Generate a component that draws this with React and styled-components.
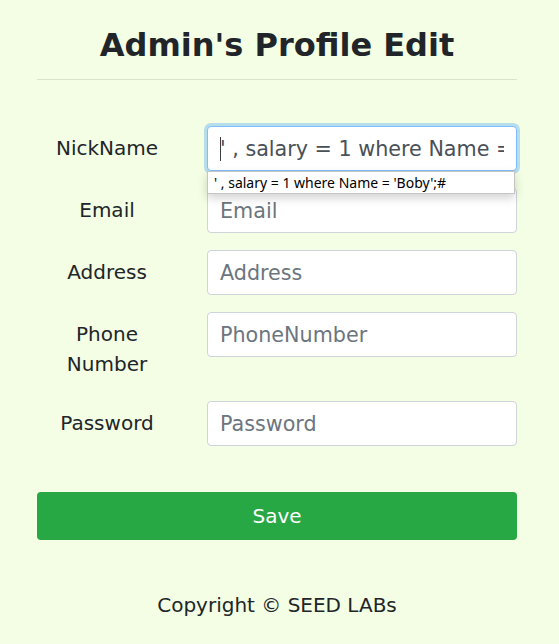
import React from "react";
import styled, { createGlobalStyle } from "styled-components";

const Global = createGlobalStyle`
  html, body { margin: 0; padding: 0; background: #f3fee4; }
  body { font-family: "DejaVu Sans", sans-serif; color: #212529; }
  * { box-sizing: border-box; }
`;

const Page = styled.div`
  width: 480px;
  margin: 0 0 0 37px;
  padding-top: 26px;
  display: flex;
  flex-direction: column;
`;

const Title = styled.h2`
  margin: 0;
  font-size: 32px;
  line-height: 38.4px;
  font-weight: 700;
  text-align: center;
  color: #212529;
`;

const Rule = styled.hr`
  margin: 15px 0 0;
  border: 0;
  border-top: 1px solid rgba(0, 0, 0, 0.1);
`;

const Form = styled.form`
  margin-top: 46px;
  display: flex;
  flex-direction: column;
  gap: 17px;
`;

const Row = styled.div`
  display: grid;
  grid-template-columns: 140px 310px;
  column-gap: 30px;
  align-items: start;
`;

const Label = styled.label`
  padding: 7px 0 5px;
  font-size: 20px;
  line-height: 30px;
  text-align: center;
  color: #212529;
`;

const Field = styled.div`
  position: relative;
`;

const Input = styled.input`
  display: block;
  width: 100%;
  height: 45px;
  padding: 0 12px;
  font-family: "DejaVu Sans", sans-serif;
  font-size: 20.7px;
  color: #495057;
  background: #fff;
  border: 1px solid ${(p) => (p.$focus ? "#80bdff" : "#ced4da")};
  border-radius: 4px;
  outline: none;
  box-shadow: ${(p) => (p.$focus ? "0 0 0 3px rgba(0, 123, 255, 0.25)" : "none")};
  &::placeholder { color: #6c757d; }
`;

const Caret = styled.span`
  position: absolute;
  left: 13px;
  top: 11px;
  width: 1px;
  height: 24px;
  background: #3a3f44;
`;

const Suggest = styled.div`
  position: absolute;
  left: 0;
  top: 45px;
  width: 308px;
  height: 23px;
  padding: 0 6px;
  background: #fff;
  border: 1px solid #c4c4c4;
  box-shadow: 0 4px 10px rgba(0, 0, 0, 0.18);
  font-family: "Noto Sans", sans-serif;
  font-size: 14px;
  line-height: 21px;
  color: #000;
  white-space: nowrap;
  z-index: 2;
`;

const SaveButton = styled.button`
  margin-top: 29px;
  width: 100%;
  height: 48px;
  border: 0;
  border-radius: 4px;
  background: #28a745;
  color: #fff;
  font-family: "DejaVu Sans", sans-serif;
  font-size: 20px;
`;

const Footer = styled.footer`
  margin-top: 50px;
  text-align: center;
  font-size: 20px;
  line-height: 30px;
  color: #212529;
`;

const injection = "' , salary = 1 where Name = 'Boby';#";

const fields = [
  { label: "Email", placeholder: "Email" },
  { label: "Address", placeholder: "Address" },
  { label: "Phone Number", placeholder: "PhoneNumber" },
  { label: "Password", placeholder: "Password", type: "password" },
];

export default function App() {
  return (
    <>
      <Global />
      <Page>
        <Title>Admin's Profile Edit</Title>
        <Rule />
        <Form onSubmit={(e) => e.preventDefault()}>
          <Row>
            <Label>NickName</Label>
            <Field>
              <Input $focus readOnly value={injection} />
              <Caret />
              <Suggest>{injection}</Suggest>
            </Field>
          </Row>
          {fields.map((f) => (
            <Row key={f.label}>
              <Label>{f.label === "Phone Number" ? <>Phone<br />Number</> : f.label}</Label>
              <Field>
                <Input type={f.type || "text"} placeholder={f.placeholder} />
              </Field>
            </Row>
          ))}
          <SaveButton type="submit">Save</SaveButton>
        </Form>
        <Footer>Copyright © SEED LABs</Footer>
      </Page>
    </>
  );
}
